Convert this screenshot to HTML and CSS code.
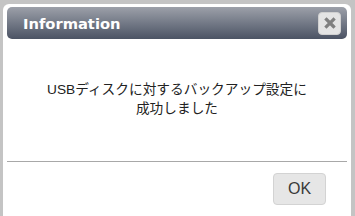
FILE: index.html
```html
<!DOCTYPE html>
<html lang="ja">
<head>
  <meta charset="UTF-8">
  <title>Information</title>
  <link rel="stylesheet" href="styles.css">
</head>
<body>
  <div class="dialog">
    <div class="titlebar">
      <span class="title">Information</span>
      <button class="close-button" aria-label="close">
        <svg width="12" height="12" viewBox="0 0 12 12">
          <path d="M2.5 2.5 L9.5 9.5 M9.5 2.5 L2.5 9.5" stroke="#808080" stroke-width="3.2" stroke-linecap="square"/>
        </svg>
      </button>
    </div>
    <div class="content">
      <p>USBディスクに対するバックアップ設定に<br>成功しました</p>
    </div>
    <div class="buttonpane">
      <button class="ok-button">OK</button>
    </div>
  </div>
</body>
</html>
```

FILE: styles.css
```css
/* Fondo */
body {
  margin: 0;
  background-color: #c4c4c4;
  height: 216px;
  overflow: hidden;
  font-family: "Liberation Sans", "Noto Sans CJK JP", sans-serif;
}

/* Dialogo */
.dialog {
  margin: 4px 4px 0 3px;
  height: 220px;
  background-color: #ffffff;
  border-radius: 6px 6px 0 0;
  padding: 3px 4px 0 4px;
  box-sizing: border-box;
}

.titlebar {
  height: 32px;
  border-radius: 5px;
  background: linear-gradient(#9ca0a9, #4b5364);
  display: flex;
  align-items: center;
  justify-content: space-between;
  padding: 0 6px 0 16px;
}

.title {
  font-family: "DejaVu Sans", sans-serif;
  font-weight: bold;
  font-size: 14.7px;
  color: #ffffff;
}

.close-button {
  width: 23px;
  height: 23px;
  padding: 0;
  border: 1px solid #d0d0d0;
  border-radius: 4px;
  background-color: #e4e4e4;
  display: flex;
  align-items: center;
  justify-content: center;
}

.content {
  height: 122px;
  border-bottom: 1px solid #a8a8a8;
  display: flex;
  align-items: center;
  justify-content: center;
}

.content p {
  margin: 0;
  padding-bottom: 3px;
  text-align: center;
  font-size: 13.7px;
  line-height: 19px;
  color: #222222;
}

.buttonpane {
  display: flex;
  justify-content: flex-end;
  padding: 11px 21px 0 0;
}

.ok-button {
  width: 53px;
  height: 32px;
  border: 1px solid #d3d3d3;
  border-radius: 4px;
  background-color: #e6e6e6;
  color: #3a3a3a;
  font-family: "Liberation Sans", sans-serif;
  font-size: 16px;
  padding: 0;
}
```
